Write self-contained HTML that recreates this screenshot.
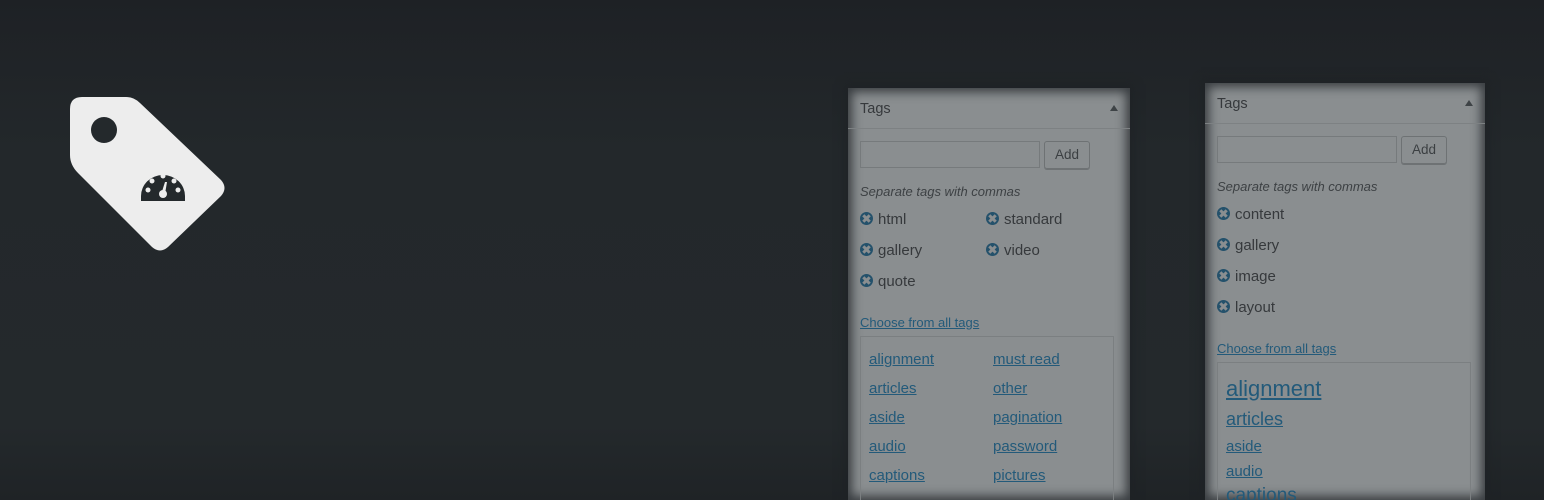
<!DOCTYPE html>
<html><head><meta charset="utf-8"><style>
html,body{margin:0;width:1544px;height:500px;overflow:hidden}
body{background:linear-gradient(#1e2125 0%,#23282b 30%,#24292c 85%,#1f2326 100%);font-family:"Liberation Sans",sans-serif;position:relative}
.p{position:absolute;background:#8a8e90;box-shadow:inset 0 0 10px 4px rgba(30,34,37,.75),0 0 8px 4px rgba(30,34,37,.6);color:#36393c;overflow:hidden}
.hd{height:40px;border-bottom:1px solid #7d8183;font-size:14.5px;line-height:42px;padding-left:12px;position:relative}
.hd:after{content:"";position:absolute;right:12px;top:17px;border:4px solid transparent;border-bottom:6px solid #3e4346;border-top:0}
.in{position:absolute;left:12px;width:180px;height:27px;border:1px solid #767a7c;box-sizing:border-box}
.btn{position:absolute;left:196px;width:46px;height:28px;border:1px solid #6e7274;border-radius:3px;box-sizing:border-box;font-size:13.5px;line-height:26px;text-align:center;color:#3b3f42;box-shadow:0 1px 0 #6e7274}
.sep{position:absolute;left:12px;font-style:italic;font-size:13px;color:#3d4144}
.t{position:absolute;font-size:15px;color:#36393c}
.t i{display:inline-block;width:13px;height:13px;border-radius:50%;background:#24516b;vertical-align:-1px;margin-right:5px;position:relative}
.t i:before,.t i:after{content:"";position:absolute;left:5px;top:2px;width:3px;height:9px;background:#8a8e90;transform:rotate(45deg)}
.t i:after{transform:rotate(-45deg)}
.a{position:absolute;color:#235a7a;text-decoration:underline;font-size:15px}
.box{position:absolute;left:12px;border:1px solid #7b7f81;box-sizing:border-box}
</style></head><body>
<svg style="position:absolute;left:0;top:0" width="300" height="300">
<path d="M82 97 L126 97 Q134 97 140 103 L221 180 Q228 188 221 196 L168 247 Q160 254 152 247 L78 173 Q70 165 70 155 L70 109 Q70 97 82 97 Z" fill="#ededed"/>
<circle cx="104" cy="130" r="13" fill="#24292c"/>
<path d="M141 201 L141 196 A22 21 0 0 1 185 196 L185 201 Z" fill="#24292c"/>
<g fill="#ededed"><circle cx="163" cy="194" r="4"/><circle cx="148" cy="190" r="2.5"/><circle cx="152" cy="181" r="2.5"/><circle cx="163" cy="176" r="2.5"/><circle cx="174" cy="181" r="2.5"/><circle cx="178" cy="190" r="2.5"/><path d="M161.5 193 L165 182 L167 182 L165 194 Z"/></g>
</svg>

<div class="p" style="left:848px;top:88px;width:282px;height:412px">
<div class="hd">Tags</div>
<div class="in" style="top:53px"></div><div class="btn" style="top:53px">Add</div>
<div class="sep" style="top:96px">Separate tags with commas</div>
<div class="t" style="left:12px;top:123px"><i></i>html</div>
<div class="t" style="left:138px;top:123px"><i></i>standard</div>
<div class="t" style="left:12px;top:154px"><i></i>gallery</div>
<div class="t" style="left:138px;top:154px"><i></i>video</div>
<div class="t" style="left:12px;top:185px"><i></i>quote</div>
<div class="a" style="left:12px;top:227px;font-size:13px">Choose from all tags</div>
<div class="box" style="top:248px;width:254px;height:200px">
<div class="a" style="left:8px;top:14px">alignment</div><div class="a" style="left:132px;top:14px">must read</div>
<div class="a" style="left:8px;top:43px">articles</div><div class="a" style="left:132px;top:43px">other</div>
<div class="a" style="left:8px;top:72px">aside</div><div class="a" style="left:132px;top:72px">pagination</div>
<div class="a" style="left:8px;top:101px">audio</div><div class="a" style="left:132px;top:101px">password</div>
<div class="a" style="left:8px;top:130px">captions</div><div class="a" style="left:132px;top:130px">pictures</div>
</div></div>

<div class="p" style="left:1205px;top:83px;width:280px;height:417px">
<div class="hd">Tags</div>
<div class="in" style="top:53px"></div><div class="btn" style="top:53px">Add</div>
<div class="sep" style="top:96px">Separate tags with commas</div>
<div class="t" style="left:12px;top:123px"><i></i>content</div>
<div class="t" style="left:12px;top:154px"><i></i>gallery</div>
<div class="t" style="left:12px;top:185px"><i></i>image</div>
<div class="t" style="left:12px;top:216px"><i></i>layout</div>
<div class="a" style="left:12px;top:258px;font-size:13px">Choose from all tags</div>
<div class="box" style="top:279px;width:254px;height:200px">
<div class="a" style="left:8px;top:13px;font-size:22px">alignment</div>
<div class="a" style="left:8px;top:46px;font-size:18px">articles</div>
<div class="a" style="left:8px;top:75px">aside</div>
<div class="a" style="left:8px;top:100px">audio</div>
<div class="a" style="left:8px;top:122px;font-size:19px">captions</div>
</div></div>
</body></html>
